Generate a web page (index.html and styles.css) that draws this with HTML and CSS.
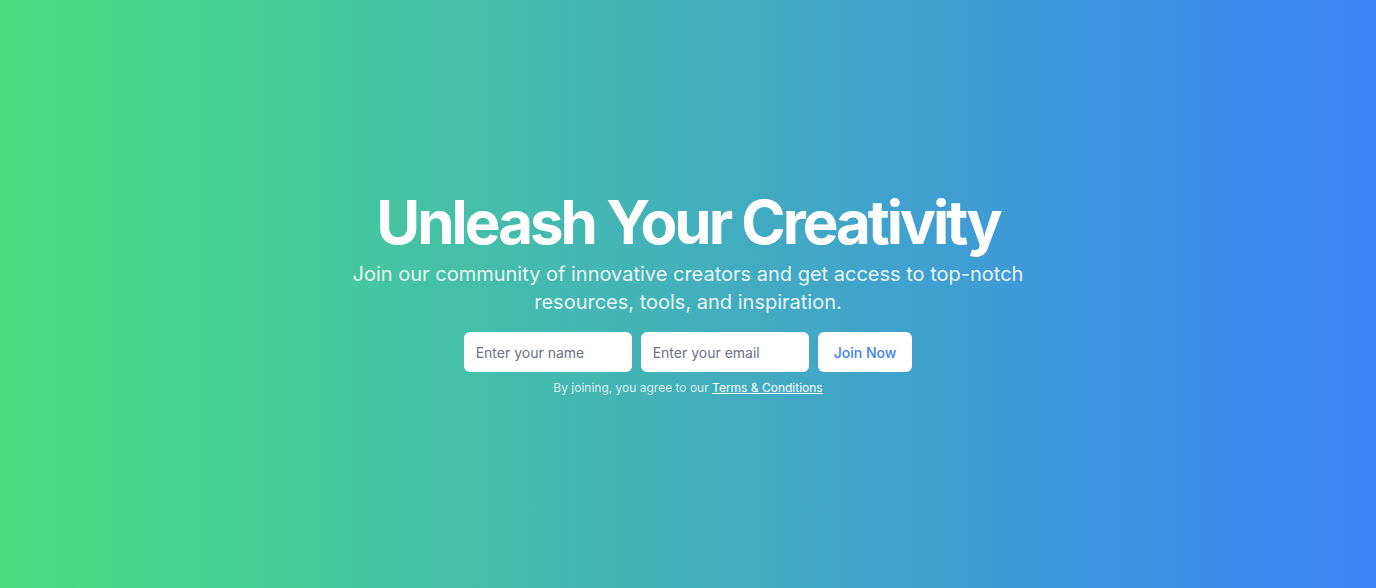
FILE: index.html
```html
<!DOCTYPE html>
<html lang="en">
<head>
<meta charset="utf-8">
<title>Unleash Your Creativity</title>
<link rel="stylesheet" href="styles.css">
</head>
<body>
<main class="hero">
  <h1 class="title">Unleash Your Creativity</h1>
  <p class="subtitle">Join our community of innovative creators and get access to top-notch resources, tools, and inspiration.</p>
  <form class="signup">
    <input class="field" type="text" placeholder="Enter your name">
    <input class="field" type="email" placeholder="Enter your email">
    <button class="join" type="button">Join Now</button>
  </form>
  <p class="terms">By joining, you agree to our <a href="#" class="terms-link">Terms &amp; Conditions</a></p>
</main>
</body>
</html>
```
FILE: styles.css
```css
* { box-sizing: border-box; }
html, body { margin: 0; padding: 0; height: 100%; }
body {
  font-family: Inter, "Noto Sans", sans-serif;
  background: linear-gradient(to right, #4ade80, #3b82f6);
  color: #fff;
}
.hero {
  height: 100%;
  display: flex;
  flex-direction: column;
  align-items: center;
  justify-content: center;
  text-align: center;
}
.title {
  margin: 0;
  font-size: 60px;
  line-height: 60px;
  font-weight: 700;
  letter-spacing: -3px;
}
.subtitle {
  margin: 8px 0 0;
  max-width: 672px;
  font-size: 20px;
  line-height: 28px;
  color: rgba(255,255,255,0.9);
}
.signup {
  margin-top: 16px;
  display: flex;
  gap: 9px;
}
.field {
  width: 168px;
  height: 40px;
  border: none;
  border-radius: 6px;
  padding: 0 12px;
  font-family: inherit;
  font-size: 14px;
  color: #374151;
  background: #fff;
  outline: none;
}
.field::placeholder { color: #6b7280; }
.join {
  height: 40px;
  padding: 0 16px;
  border: none;
  border-radius: 6px;
  background: #fff;
  color: #3b82f6;
  font-family: inherit;
  font-size: 14px;
  font-weight: 500;
  cursor: pointer;
}
.terms {
  margin: 8px 0 0;
  font-size: 12px;
  line-height: 16px;
  color: rgba(255,255,255,0.8);
}
.terms-link {
  color: #fff;
  text-decoration: underline;
}
```
